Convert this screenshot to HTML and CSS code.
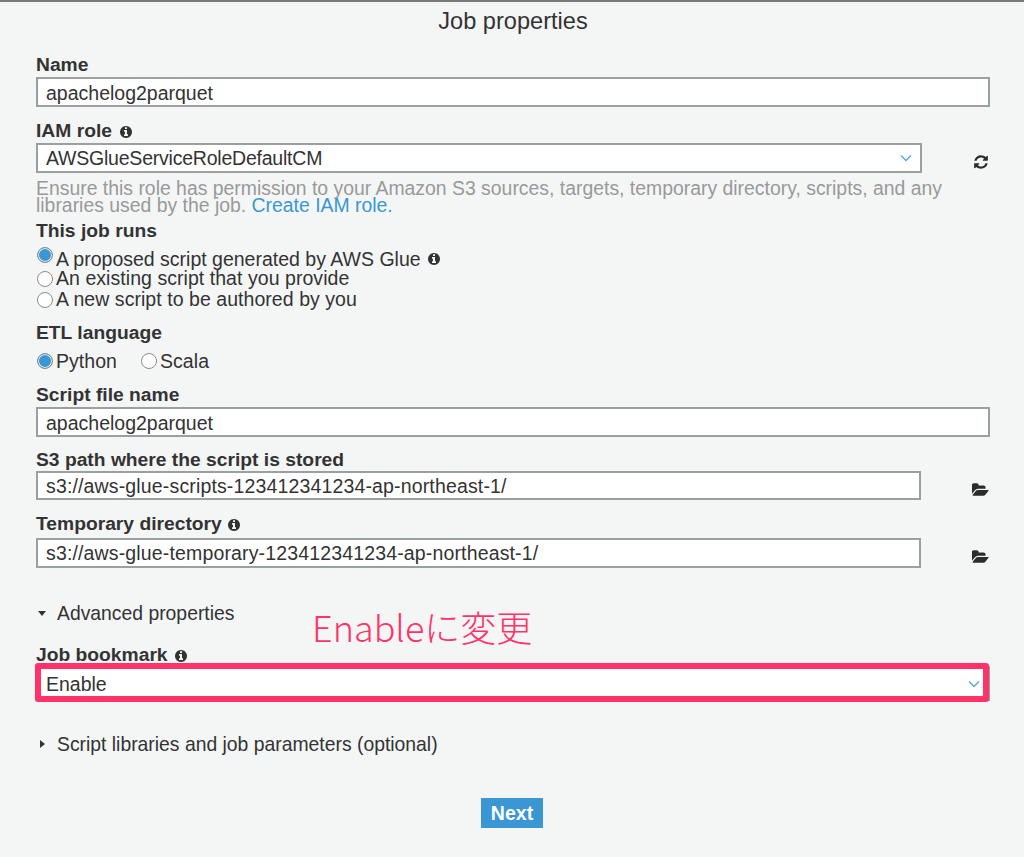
FILE: index.html
```html
<!DOCTYPE html>
<html lang="en">
  <head>
    <meta charset="UTF-8" />
    <title>Job properties</title>
    <link rel="stylesheet" href="styles.css">
  </head>
  <body>
    <svg class="defs" width="0" height="0">
      <symbol id="i-info" viewBox="0 0 1792 1792"><path d="M1024 1376v-160q0-14-9-23t-23-9h-96v-512q0-14-9-23t-23-9h-320q-14 0-23 9t-9 23v160q0 14 9 23t23 9h96v320h-96q-14 0-23 9t-9 23v160q0 14 9 23t23 9h448q14 0 23-9t9-23zm-128-896v-160q0-14-9-23t-23-9h-192q-14 0-23 9t-9 23v160q0 14 9 23t23 9h192q14 0 23-9t9-23zm640 416q0 209-103 385.5t-279.5 279.5-385.5 103-385.5-103-279.5-279.5-103-385.5 103-385.5 279.5-279.5 385.5-103 385.5 103 279.5 279.5 103 385.5z"/></symbol>
      <symbol id="i-refresh" viewBox="0 0 1792 1792"><path d="M1639 1056q0 5-1 7-64 268-268 434.5t-478 166.5q-146 0-282.5-55t-243.5-157l-129 129q-19 19-45 19t-45-19-19-45v-448q0-26 19-45t45-19h448q26 0 45 19t19 45-19 45l-137 137q71 66 161 102t187 36q134 0 250-65t186-179q11-17 53-117 8-23 30-23h192q13 0 22.5 9.5t9.5 22.5zm25-800v448q0 26-19 45t-45 19h-448q-26 0-45-19t-19-45 19-45l138-138q-148-137-349-137-134 0-250 65t-186 179q-11 17-53 117-8 23-30 23h-199q-13 0-22.5-9.5t-9.5-22.5v-7q65-268 270-434.5t480-166.5q146 0 284 55.5t245 156.5l130-129q19-19 45-19t45 19 19 45z"/></symbol>
      <symbol id="i-folder" viewBox="0 0 1920 1792"><path d="M1815 952q0 31-31 66l-336 396q-43 51-120.5 86.5t-143.5 35.5h-1088q-34 0-60.5-13t-26.5-43q0-31 31-66l336-396q43-51 120.5-86.5t143.5-35.5h1088q34 0 60.5 13t26.5 43zm-343-344v160h-832q-94 0-197 47.5t-164 119.5l-337 396-5 6q0-4-.5-12.5t-.5-12.5v-960q0-92 66-158t158-66h320q92 0 158 66t66 158v32h544q92 0 158 66t66 158z"/></symbol>
      <symbol id="i-chevron" viewBox="0 0 12 8"><path d="M1 1.5l5 5 5-5" fill="none" stroke="#5aa7d8" stroke-width="1.4"/></symbol>
    </svg>

    <div class="container">
      <h1>Job properties</h1>

      <div class="field field-name">
        <label>Name</label>
        <input class="text-input" type="text" value="apachelog2parquet" />
      </div>

      <div class="field field-role">
        <label>IAM role <svg class="info"><use href="#i-info"/></svg></label>
        <div class="row">
          <div class="select role-value">AWSGlueServiceRoleDefaultCM<svg class="chevron"><use href="#i-chevron"/></svg></div>
          <svg class="side-icon refresh"><use href="#i-refresh"/></svg>
        </div>
        <p class="help">Ensure this role has permission to your Amazon S3 sources, targets, temporary directory, scripts, and any libraries used by the job. <a href="#">Create IAM role.</a></p>
      </div>

      <div class="field field-runs">
        <label>This job runs</label>
        <div class="radio-list">
          <div class="radio first"><input type="radio" name="runs" checked />A proposed script generated by AWS Glue <svg class="info info-gap"><use href="#i-info"/></svg></div>
          <div class="radio"><input type="radio" name="runs" />An existing script that you provide</div>
          <div class="radio"><input type="radio" name="runs" />A new script to be authored by you</div>
        </div>
      </div>

      <div class="field field-lang">
        <label>ETL language</label>
        <div class="radio-inline">
          <div class="radio"><input type="radio" name="lang" checked />Python</div>
          <div class="radio"><input type="radio" name="lang" />Scala</div>
        </div>
      </div>

      <div class="field field-script">
        <label>Script file name</label>
        <input class="text-input" type="text" value="apachelog2parquet" />
      </div>

      <div class="field field-s3">
        <label>S3 path where the script is stored</label>
        <div class="row">
          <div class="select path-value">s3://aws-glue-scripts-123412341234-ap-northeast-1/</div>
          <svg class="side-icon folder"><use href="#i-folder"/></svg>
        </div>
      </div>

      <div class="field field-temp">
        <label>Temporary directory <svg class="info"><use href="#i-info"/></svg></label>
        <div class="row">
          <div class="select path-value">s3://aws-glue-temporary-123412341234-ap-northeast-1/</div>
          <svg class="side-icon folder"><use href="#i-folder"/></svg>
        </div>
      </div>

      <div class="toggle toggle-advanced"><span class="caret-down"></span>Advanced properties</div>

      <div class="field field-bookmark">
        <label>Job bookmark <svg class="info"><use href="#i-info"/></svg></label>
        <div class="select select-full">Enable<svg class="chevron"><use href="#i-chevron"/></svg></div>
        <div class="highlight"></div>
        <div class="note">Enableに変更</div>
      </div>

      <div class="toggle toggle-libs"><span class="caret-right"></span>Script libraries and job parameters (optional)</div>

      <div class="actions">
        <button class="next-btn">Next</button>
      </div>
    </div>
  </body>
</html>
```

FILE: styles.css
```css
* {
  box-sizing: border-box;
  margin: 0;
  padding: 0;
}

html,
body {
  height: 857px;
  overflow: hidden;
}

body {
  background-color: #f4f6f6;
  border-top: 2px solid #7a7a7a;
  font-family: "Liberation Sans", Arial, sans-serif;
  font-size: 19.5px;
  color: #333;
}

.defs {
  position: absolute;
}

.container {
  padding: 0 34px 0 36px;
}

h1 {
  height: 38px;
  font-size: 23.6px;
  font-weight: normal;
  line-height: 38px;
  text-align: center;
  color: #333;
}

label {
  display: block;
  height: 22px;
  padding-top: 1px;
  font-size: 19.25px;
  font-weight: bold;
  line-height: 22px;
}

.field-name {
  margin-top: 13px;
}

.field-role {
  margin-top: 12px;
}

.field-runs {
  margin-top: 5px;
}

.field-lang {
  margin-top: 11px;
}

.field-script {
  margin-top: 11px;
}

.field-s3 {
  margin-top: 11px;
}

.field-temp {
  margin-top: 12px;
}

.text-input,
.select {
  display: block;
  width: 100%;
  height: 30px;
  margin-top: 2px;
  padding: 0 8px;
  border: 2px solid #9aa0a0;
  background-color: #fff;
  font-family: inherit;
  font-size: 19.5px;
  line-height: 26px;
  color: #333;
  outline: none;
}

.text-input {
  padding-top: 2px;
}

.row {
  display: flex;
  align-items: center;
}

.select {
  display: flex;
  align-items: center;
  justify-content: space-between;
  width: 886px;
}

.role-value {
  letter-spacing: -0.22px;
}

.path-value {
  letter-spacing: 0.15px;
}

.field-s3 .select {
  height: 29px;
  margin-top: 1px;
}

.field-temp .select {
  margin-top: 4px;
}

.select-full {
  width: 100%;
  height: 35px;
}

.chevron {
  width: 12px;
  height: 8px;
}

.side-icon {
  fill: #2b2b2b;
  margin-left: 51px;
}

.refresh {
  width: 16px;
  height: 16px;
  margin-top: 10px;
}

.folder {
  width: 18px;
  height: 16px;
  margin-top: 10px;
}

.field-temp .folder {
  margin-top: 12px;
}

.info {
  display: inline-block;
  width: 14px;
  height: 14px;
  margin-left: 1px;
  vertical-align: -2px;
  fill: #333;
}

.field-role .info {
  margin-left: 3px;
}

.field-bookmark .info {
  margin-left: 2px;
}

.info-gap {
  margin-left: 2px;
  vertical-align: 5.5px;
}

.help {
  margin-top: 7px;
  font-size: 19.4px;
  line-height: 17px;
  color: #999;
}

.help a {
  color: #3a97d3;
  text-decoration: none;
}

.radio-list {
  margin-top: 3px;
}

.radio {
  display: flex;
  align-items: center;
  height: 21px;
  letter-spacing: 0.05px;
  white-space: pre;
}

.radio.first {
  height: 24px;
  padding-top: 6px;
  letter-spacing: 0;
}

.radio input {
  appearance: none;
  flex: none;
  width: 16px;
  height: 16px;
  margin: 0 3px 0 1px;
  border: 1.5px solid #8c8c8c;
  border-radius: 50%;
  background-color: #fff;
}

.radio input:checked {
  background-color: #3a97d3;
  box-shadow: inset 0 0 0 1px #e8eef1;
}

.radio.first input {
  margin-top: -9px;
}

.radio-inline {
  display: flex;
  gap: 23px;
  margin-top: 7px;
}

.radio-inline .radio {
  height: 22px;
}

.toggle {
  display: flex;
  align-items: center;
  height: 24px;
  font-size: 19.35px;
}

.toggle-advanced {
  margin-top: 33px;
}

.toggle-libs {
  margin-top: 31px;
}

.caret-down,
.caret-right {
  width: 0;
  height: 0;
  border-style: solid;
}

.caret-down {
  margin: 0 11px 0 2px;
  border-width: 5px 4.5px 0;
  border-color: #333 transparent transparent;
}

.caret-right {
  margin: 0 12px 0 4px;
  border-width: 4.5px 0 4.5px 5px;
  border-color: transparent transparent transparent #333;
}

.field-bookmark {
  position: relative;
  margin-top: 18px;
}

.field-bookmark .select {
  margin-top: 1px;
}

.highlight {
  position: absolute;
  left: -1px;
  right: 1px;
  top: 20px;
  height: 39px;
  border: 6px solid #ff3369;
  border-radius: 3px;
}

.note {
  position: absolute;
  left: 276px;
  top: -39px;
  font-family: "Noto Sans CJK JP", "Liberation Sans", sans-serif;
  font-size: 36px;
  font-weight: 300;
  line-height: 44px;
  color: #ff3369;
  white-space: nowrap;
}

.actions {
  display: flex;
  justify-content: center;
  margin-top: 42px;
  padding-right: 2px;
}

.next-btn {
  width: 62px;
  height: 30px;
  border: none;
  background-color: #3a97d3;
  font-family: inherit;
  font-size: 19.5px;
  font-weight: bold;
  color: #fff;
}
```
